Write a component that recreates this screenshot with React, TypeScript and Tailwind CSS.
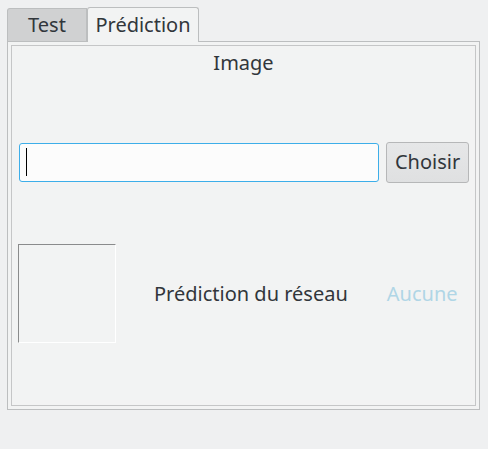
export default function App() {
  return (
    <div
      className="w-[488px] h-[449px] bg-[#eff0f1] text-[#31363b] pt-[7px] pl-[7px]"
      style={{ fontFamily: '"Noto Sans", sans-serif' }}
    >
      <div className="flex items-end h-[34px]">
        <div className="w-[80px] h-[33px] bg-[#d0d1d2] border border-b-0 border-[#bcbebf] rounded-tl-[3px] flex items-center justify-center text-[20px] leading-none pb-[1px]">
          Test
        </div>
        <div className="w-[112px] h-[35px] -mb-px relative z-10 bg-[#f2f3f3] border border-b-0 border-[#bcbebf] rounded-t-[3px] flex items-center justify-center text-[20px] leading-none pb-[1px]">
          Prédiction
        </div>
      </div>
      <div className="w-[473px] h-[369px] border border-[#bcbebf] bg-[#f2f3f3] p-[3px]">
        <div className="h-full border border-[#c5c6c7] flex flex-col">
          <div className="mt-[4px] text-center text-[20px] leading-[26px]">Image</div>
          <div className="mt-[66px] flex items-center h-[40px] pl-[7px] pr-[6px]">
            <div className="w-[361px] h-[39px] bg-[#fcfcfc] border border-[#3daee9] rounded-[3px] flex items-center pl-[6px]">
              <div className="w-px h-[28px] bg-black" />
            </div>
            <button className="ml-[7px] w-[83px] h-[41px] rounded-[3px] border border-[#b6b7b8] bg-gradient-to-b from-[#e6e7e8] to-[#dfe0e1] text-[20px] leading-none">
              Choisir
            </button>
          </div>
          <div className="mt-[62px] flex items-center h-[99px] pl-[6px]">
            <div className="w-[98px] h-[99px] border-l border-t border-[#8a8b8c] border-r border-r-white border-b border-b-white" />
            <div className="ml-[38px] text-[20px] leading-none pt-[1px]">Prédiction du réseau</div>
            <div className="ml-[39px] text-[20px] leading-none pt-[1px] text-[#b0d6e6]">Aucune</div>
          </div>
        </div>
      </div>
    </div>
  )
}
